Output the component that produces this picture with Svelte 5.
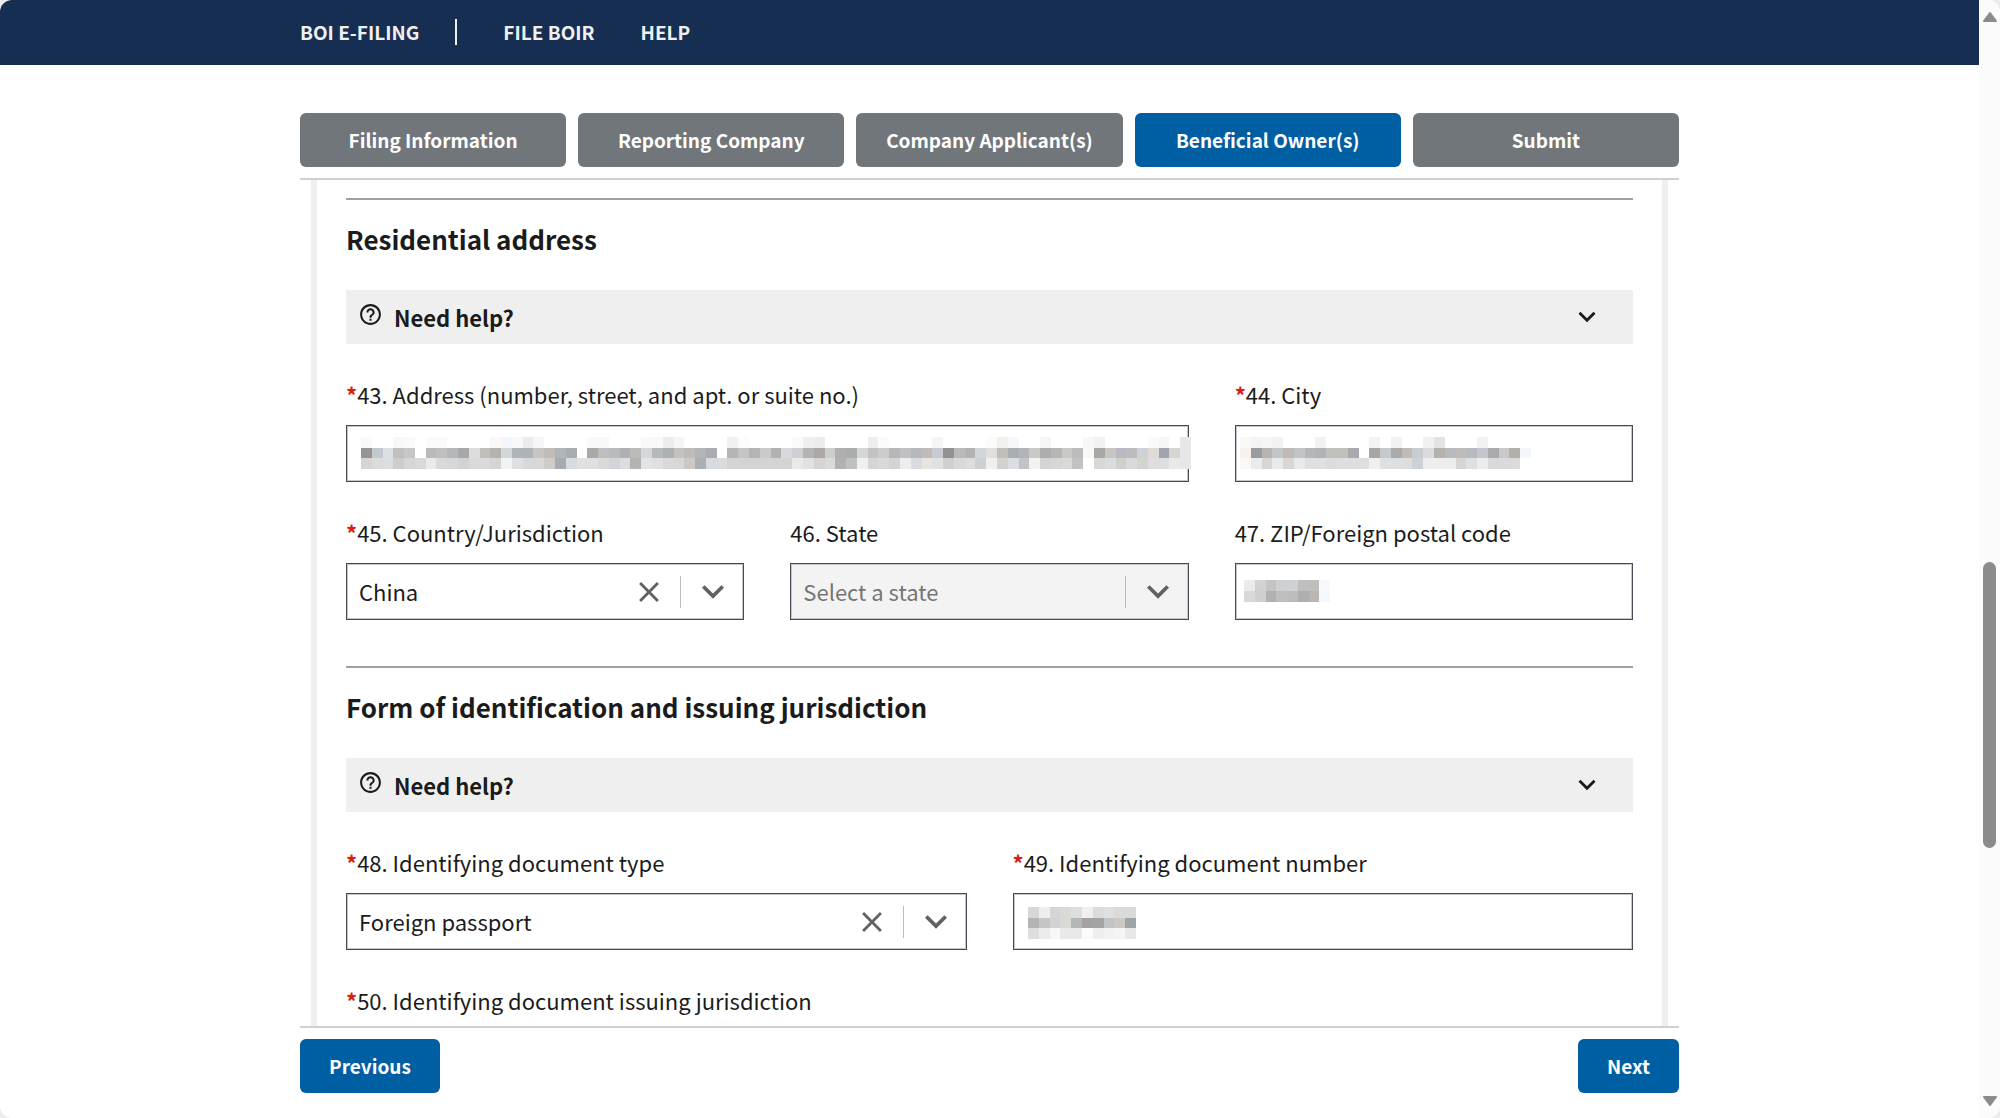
<script>
  const tabs = [
    'Filing Information',
    'Reporting Company',
    'Company Applicant(s)',
    'Beneficial Owner(s)',
    'Submit'
  ];
  let current = $state('Beneficial Owner(s)');

  // Redacted values: one string per mosaic row, "-" leaves a cell empty.
  const masks = {
    address: [
      'f9f9f9 - - f8f8f8 fafafa - fafafa fafafa - - - - fbf8f6 f3f6fa f8f8fa eaebee f5f5f7 - - - - faf8fb f8f8fa - - - f9f9fa f9f9f9 ededee f6f6f6 - - - - f1f1f3 fcfcfc - - - - fafafa f0eeee edebeb - - - - efeeed fbfbfb - - - - f5f5f5 - - - - fdfbfa f2f0ec f5f7fa - - f4f5f5 - - - f7f7f8 f2f2f3 - - - - fbf9f9 f4f5f8 - e6e7e9',
      '989493 c3cacd dbe0e2 bfbfc0 c7c7c7 - bbbab8 bfbfbd b5b7b9 a6a9a8 dedddd c0bfbc b5b3ad d3d7db afb4b8 aeb3b5 c6c5c3 bfbcba b2b5b8 a9adb2 - aaa9a6 bcbec1 b8babe b0b0b3 bdbab8 d5d8db b4b9bd adafb0 c4c1bf bfbbb9 b4b5b8 a9adb1 - b6b5b5 c5c5c5 b4b4b5 cacaca b4b0ad d6dadf d0d0d2 b3b3b3 ada8a6 cdcecb b0afb0 abacac d4d7da c4c3c3 cdcccc b7b7b9 c0c0c3 b8b8bc c0bbba c7cad0 929293 bcb9bb b3b3b4 d3d6d9 e1dfdd c0beb7 a8aeb2 b2b4b8 cac8c4 abadae b5b6b5 cac8c4 bcbcbd f8f8f8 a9a8a5 c8c5c3 b9bac1 bcbbbd cdd2d5 e1dbd7 a1a4af d7d5d4 e6e7e9',
      'd7d4d6 dcdbdc dcdde0 cdcdcd d6d6d8 d9d9d9 ebe9ea d9d9da d5d7db d3d2d0 d9dadb dbd9d9 d5d5d4 f0f2f4 dfe0e3 d8d8d9 d9d8d8 cfcbc8 a5abb1 d9dcdf e0e0e0 e0e0e2 dbdad9 d2d4d9 dcdde0 b4b3b3 e2e4e6 e0e0e3 d9d9d9 d8d7d8 cec8c5 a9afb3 d7dade dbdbdb d5d3d3 d3d3d3 d3d3d3 d3d3d3 d3d3d3 d4d4d4 e9e9ea e0e2e6 d6d4d2 dbdad9 b1b1b2 c0c0c0 eef0f2 d6d5d5 d9d9d9 d4d4d4 eeecee d8dbdf e8e4e1 dfe1e3 d1cfcc d9d9d9 dddddd cfd0d3 efeff0 d4d2cf dadee2 c3c3c5 f2f2f2 d4d4d4 d6d6d6 dad9d8 c1c2c4 - d8d8d6 dadde0 d0cfce dadadc d5d3ce dedee0 dcdedf e9e9e9 e6e7e9'
    ],
    city: [
      'fbf9f5 f4f4f5 f6f6f8 f2f2f2 - - - f2f2f3 - - - - f3f3f3 - f2f2f2 - - f1f0f1 e4e2e4 - - - f2f2f2 - - - -',
      'f7f2ea 999ba3 b5b4b0 c2c5ca c0b9b5 c3c4c7 b5b7ba afb2b7 c0c0bd c2beba a9aab0 - a6a5a2 c6c9cb abaaaa c0bbb4 c8cdd3 dbdadd b5b2ae b9bac0 bfbbb9 b9babd c3c7cd aaaaac cac8c8 b3b0ac f2f5f9',
      'fcf9f5 eaebed d8d5d2 eaeaeb dad6d3 e8e9ea dfe0e0 dfe0e2 dddcdd dedede dedede dfdfdf efefef dde0e3 dde0e3 dfdedc cdd2d7 ededef ededed ededed d7d4d5 dfe0e2 ececee dadadc dadadb dcdadb -'
    ],
    zip: [
      'ebebeb d2d1d3 c5c4c2 ced0d2 cfd1d4 bec0c0 c1bfbd f7f9fc',
      'd9d8d6 cdcfd1 b0b1b1 bdbfc1 bdbdbf aeafb0 bab5b2 f5f9fe'
    ],
    document: [
      'd7d7d7 eeeeef d6d5d5 dad9d8 dedede f0f0f1 dadbda dfdfdf dadada dadada',
      'b3b4b6 c4c6c4 d1d2d4 dbd9d3 b3b7b5 a3a2a0 a5a4a2 c1c5c6 ccc9c4 9fa4a6',
      'dedede ebebeb f7f7f5 e9e9e9 e9e9eb fafcfb eeeeee f1f2f3 f5f6f4 e8e8e8'
    ]
  };
</script>

{#snippet mosaic(name)}
  {@const rows = masks[name].map((r) => r.split(' '))}
  <svg
    class="mosaic {name}"
    width={Math.round(rows[0].length * 10.78)}
    height={Math.round(rows.length * 10.78)}
    viewBox="0 0 {rows[0].length} {rows.length}"
    preserveAspectRatio="none"
    shape-rendering="crispEdges"
    aria-hidden="true"
  >
    {#each rows as row, y}
      {#each row as c, x}
        {#if c !== '-'}<rect {x} {y} width="1" height="1" fill="#{c}" />{/if}
      {/each}
    {/each}
  </svg>
{/snippet}

{#snippet chevron(size)}
  <svg width={size} height={size} viewBox="0 0 24 24" fill="currentColor" aria-hidden="true">
    <path d="M16.59 8.290 12 12.870 7.410 8.290 6 9.700l6 6 6-6z" />
  </svg>
{/snippet}

{#snippet label(id, text, required)}
  <label for={id}>{#if required}<b class="star">*</b>{/if}{text}</label>
{/snippet}

{#snippet textField(id, text, required, mask)}
  <div class="field" class:wide={mask === 'address'}>
    {@render label(id, text, required)}
    <div class="control">
      <input {id} type="text" />
      {@render mosaic(mask)}
    </div>
  </div>
{/snippet}

{#snippet selectField(id, text, required, value, disabled)}
  <div class="field">
    {@render label(id, text, required)}
    <div class="control">
      <select {id} {disabled}><option>{value}</option></select>
      <div class="indicators">
        {#if !disabled}
          <button type="button" class="clear" aria-label="Clear selection">
            <svg width="34" height="34" viewBox="0 0 24 24" fill="currentColor" aria-hidden="true">
              <path d="M19 6.41 17.59 5 12 10.59 6.41 5 5 6.41 10.59 12 5 17.59 6.41 19 12 13.41 17.59 19 19 17.59 13.41 12z" />
            </svg>
          </button>
        {/if}
        <span class="rule"></span>
        {@render chevron(44)}
      </div>
    </div>
  </div>
{/snippet}

{#snippet help()}
  <button type="button" class="help">
    <svg class="question" width="25" height="25" viewBox="0 0 24 24" fill="currentColor" aria-hidden="true">
      <path d="M11 18h2v-2h-2v2zm1-16C6.48 2 2 6.48 2 12s4.480 10 10 10 10-4.480 10-10S17.520 2 12 2zm0 18c-4.410 0-8-3.590-8-8s3.590-8 8-8 8 3.590 8 8-3.590 8-8 8zm0-14c-2.210 0-4 1.790-4 4h2c0-1.100.9-2 2-2s2 .9 2 2c0 2-3 1.750-3 5h2c0-2.250 3-2.500 3-5 0-2.210-1.790-4-4-4z" />
    </svg>
    <span>Need help?</span>
    {@render chevron(34)}
  </button>
{/snippet}

<div class="window">
  <div class="page">
    <header>
      <nav class="container">
        <a href="#home" class="brand">BOI E-FILING</a>
        <a href="#file">FILE BOIR</a>
        <a href="#help">HELP</a>
      </nav>
    </header>

    <main class="container">
      <div class="tabs">
        {#each tabs as tab}
          <button type="button" class:active={tab === current} onclick={() => (current = tab)}>{tab}</button>
        {/each}
      </div>

      <div class="viewport">
        <form class="panel">
          <section>
            <h2>Residential address</h2>
            {@render help()}
            <div class="grid three">
              {@render textField('f43', '43. Address (number, street, and apt. or suite no.)', true, 'address')}
              {@render textField('f44', '44. City', true, 'city')}
              {@render selectField('f45', '45. Country/Jurisdiction', true, 'China', false)}
              {@render selectField('f46', '46. State', false, 'Select a state', true)}
              {@render textField('f47', '47. ZIP/Foreign postal code', false, 'zip')}
            </div>
          </section>
          <section>
            <h2>Form of identification and issuing jurisdiction</h2>
            {@render help()}
            <div class="grid two">
              {@render selectField('f48', '48. Identifying document type', true, 'Foreign passport', false)}
              {@render textField('f49', '49. Identifying document number', true, 'document')}
              <div class="field">
                {@render label('f50', '50. Identifying document issuing jurisdiction', true)}
                <div class="control"><select id="f50"></select></div>
              </div>
            </div>
          </section>
        </form>
      </div>

      <footer>
        <button type="button">Previous</button>
        <button type="button">Next</button>
      </footer>
    </main>
  </div>

  <div class="scrollbar" aria-hidden="true">
    <svg width="14" height="10" viewBox="0 0 14 10"><path d="M7 1 13 9H1z" /></svg>
    <div class="track"><div class="thumb"></div></div>
    <svg width="14" height="10" viewBox="0 0 14 10"><path d="M7 9 1 1h12z" /></svg>
  </div>
</div>

<style>
  :global(body) {
    background: #ececec;
  }
  .window {
    display: flex;
    height: 100vh;
    border-radius: 12px;
    overflow: hidden;
    background: #fff;
    color: #1b1b1b;
    font-family: 'Noto Sans CJK SC', 'Noto Sans', sans-serif;
    font-size: 22px;
    line-height: 32px;
  }
  .window * {
    box-sizing: border-box;
  }
  button,
  input,
  select {
    font: inherit;
    color: inherit;
    margin: 0;
  }
  .page {
    flex: 1;
    min-width: 0;
    display: flex;
    flex-direction: column;
  }
  .container {
    width: 100%;
    max-width: 1379px;
    margin: 0 auto;
  }

  header {
    background: #162e51;
  }
  nav {
    display: flex;
    align-items: center;
    gap: 46px;
    height: 65px;
    padding-bottom: 2px;
  }
  nav a {
    color: #f0f0f0;
    font-size: 19px;
    font-weight: 700;
    line-height: 26px;
    text-decoration: none;
  }
  .brand {
    padding-right: 36px;
    border-right: 2px solid #f0f0f0;
  }

  main {
    flex: 1;
    min-height: 0;
    display: flex;
    flex-direction: column;
  }
  .tabs {
    display: grid;
    grid-template-columns: repeat(5, 1fr);
    gap: 12px;
    padding: 48px 0 11px;
  }
  .tabs button,
  footer button {
    height: 54px;
    border: 0;
    border-radius: 6px;
    background: #71767a;
    color: #fff;
    font-size: 19px;
    font-weight: 700;
  }
  .tabs .active,
  footer button {
    background: #005ea2;
  }

  .viewport {
    flex: 1;
    min-height: 0;
    overflow: hidden;
    padding: 0 11px;
    border-top: 2px solid #d0d0d0;
    border-bottom: 2px solid #d0d0d0;
  }
  .panel {
    padding: 18px 29px 40px;
    border: solid #efefef;
    border-width: 0 6px;
  }
  section {
    border-top: 2px solid #a0a0a0;
  }
  section + section {
    margin-top: 46px;
  }
  h2 {
    margin: 19px 0 31px;
    font-size: 26px;
    font-weight: 700;
    line-height: 40px;
  }
  .help {
    display: flex;
    align-items: center;
    width: 100%;
    height: 54px;
    padding: 0 29px 0 12px;
    border: 0;
    background: #efefef;
    font-weight: 700;
    text-align: left;
  }
  .help span {
    flex: 1;
    padding-left: 11px;
  }
  .question {
    margin-bottom: 6px;
  }

  .grid {
    display: grid;
    gap: 34px 46px;
    padding-top: 34px;
  }
  .three {
    grid-template-columns: repeat(3, 1fr);
  }
  .two {
    grid-template-columns: repeat(2, 1fr);
  }
  .wide {
    grid-column: span 2;
  }
  label {
    display: block;
    margin-bottom: 15px;
  }
  .star {
    color: #d8200c;
  }
  .control {
    position: relative;
  }
  input,
  select {
    display: block;
    width: 100%;
    height: 57px;
    padding: 0 12px 2px;
    border: 1px solid #454a54;
    border-radius: 0;
    box-shadow: inset 0 0 0 1px #c4c6c9;
    background: #fff;
    appearance: none;
  }
  select:disabled {
    background: #f3f3f3;
    color: #757575;
    opacity: 1;
  }
  .indicators {
    position: absolute;
    inset: 0 9px 0 auto;
    display: flex;
    align-items: center;
    gap: 10px;
    color: #616161;
    pointer-events: none;
  }
  .clear {
    display: flex;
    margin-right: 4px;
    padding: 0;
    border: 0;
    background: none;
    pointer-events: auto;
  }
  .rule {
    width: 1px;
    height: 32px;
    background: #bbb;
  }
  .mosaic {
    position: absolute;
    left: 15px;
    top: 12px;
  }
  .mosaic.city {
    left: 5px;
  }
  .mosaic.zip {
    left: 9px;
    top: 17px;
  }
  .mosaic.document {
    top: 14px;
  }

  footer {
    display: flex;
    justify-content: space-between;
    padding: 11px 0 25px;
  }
  footer button {
    padding: 0 29px;
  }

  .scrollbar {
    display: flex;
    flex-direction: column;
    align-items: center;
    gap: 14px;
    width: 21px;
    padding: 12px 0;
    background: #fbfbfb;
  }
  .scrollbar path {
    fill: #8b8b8b;
    stroke: #8b8b8b;
    stroke-width: 2;
    stroke-linejoin: round;
  }
  .track {
    flex: 1;
    display: grid;
    grid-template-rows: 526fr 286fr 234fr;
  }
  .thumb {
    grid-row: 2;
    width: 13px;
    border-radius: 7px;
    background: #8b8b8b;
  }
</style>
